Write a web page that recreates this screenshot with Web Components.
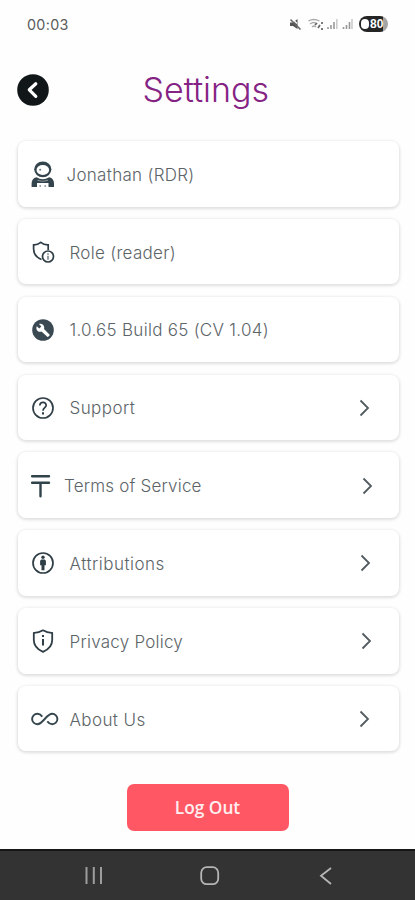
<!DOCTYPE html>
<html lang="en">
<head>
<meta charset="utf-8">
<title>Settings</title>
<style>
html,body{margin:0;width:415px;height:900px;overflow:hidden;background:#fefefe}
</style>
</head>
<body>
<settings-app></settings-app>
<script>
const icons = {
  person: '<svg width="24" height="27" viewBox="0 0 24 27"><ellipse cx="11.800" cy="8.300" rx="8.600" ry="7.900" fill="#34444c"/><ellipse cx="11.800" cy="9" rx="6.300" ry="4.900" fill="#fff"/><circle cx="9.200" cy="8.700" r="1" fill="#6a757a"/><path d="M.6 26v-3.500Q.6 17.500 5.500 16.300 11.800 20 18.200 16.300 23 17.500 23 22.500V26H17.500V22H6V26Z" fill="#34444c"/><path d="M6.500 19.300Q11.800 21.300 17 19.300" stroke="#8a9498" fill="none"/><path d="M8.500 24h1.500v2H8.500zM13.500 24h1.500v2h-1.500z" fill="#9aa2a5"/></svg>',
  role: '<svg width="24" height="24" viewBox="0 0 24 24"><g fill="none" stroke="#2f3e46" stroke-width="1.700"><path d="M10.500 19.500C5.500 17.500 2.600 14 2.600 9V4.800Q6.500 5 9.800 2.300 13 5 17.200 4.800V10"/><circle cx="17" cy="16.500" r="5.500"/></g><path d="M16.200 13.300h1.600v1.500h-1.600zm0 2.500h1.600v4h-1.600z" fill="#7b868c"/></svg>',
  build: '<svg width="24" height="24" viewBox="0 0 24 24"><circle cx="12" cy="12" r="10.800" fill="#3b4a52"/><path d="M10.500 13.600C8.800 14.200 7 13.600 6 12.200 5.200 11 5.200 9.500 5.800 8.300L8.200 10.600 10.300 8.500 8 6.100C9.300 5.600 10.900 5.800 12 6.800 13.200 8 13.500 9.700 13 11.100L18.500 16.500Q18.900 17 18.500 17.400L17.200 18.700Q16.700 19.100 16.300 18.700Z" fill="#fff"/></svg>',
  help: '<svg width="24" height="24" viewBox="0 0 24 24" fill="none" stroke="#2f3e46" stroke-width="1.700"><circle cx="12" cy="12" r="10"/><path d="M8.800 9.500Q9 6.300 12 6.300T15.200 9.300C15.200 11.600 12 11.900 12 14.800"/><path d="M12 16.200v2.200" stroke-width="2"/></svg>',
  terms: '<svg width="20" height="24" viewBox="0 0 20 24"><path d="M1 2.300H18M1 8.800H18M9.500 9V22.300" stroke="#30424a" stroke-width="2.400" stroke-linecap="round"/></svg>',
  attribution: '<svg width="24" height="24" viewBox="0 0 24 24"><circle cx="12" cy="12" r="10" fill="none" stroke="#2f3e46" stroke-width="1.700"/><circle cx="12" cy="6.300" r="1.700" fill="#2f3e46"/><path d="M10.300 8.500h3.400l1.200 1.200v4.600h-1.400v5h-3v-5H9.100V9.700z" fill="#2f3e46"/></svg>',
  privacy: '<svg width="24" height="26" viewBox="0 0 24 26"><path d="M12 2.300Q16.500 5 21.200 4.800V12Q21.200 20 12 23.800 2.800 20 2.800 12V4.800Q7.500 5 12 2.300Z" fill="none" stroke="#2f3e46" stroke-width="1.800" stroke-linejoin="round"/><path d="M11 7h2v2h-2zm0 4h2v6.500h-2z" fill="#2f3e46"/></svg>',
  infinity: '<svg width="28" height="16" viewBox="0 0 28 16"><path d="M16.300 10.300C18 12.400 19.300 13.200 21.200 13.200A5.200 5.200 0 0 0 21.200 2.800C15.500 2.800 12 13.200 6.300 13.200A5.200 5.200 0 0 1 6.300 2.800C8.500 2.800 9.800 3.700 11.300 5.600" fill="none" stroke="#35464e" stroke-width="1.900"/></svg>'
};

function define(name, markup, setup) {
  customElements.define(name, class extends HTMLElement {
    constructor() {
      super();
      this.attachShadow({mode: 'open'}).innerHTML = markup;
    }
    connectedCallback() { if (setup) setup(this, this.shadowRoot); }
  });
}

define('status-bar', `<style>
:host{display:flex;box-sizing:border-box;height:48px;padding:0 27px;align-items:center;justify-content:space-between;font:14.300px Inter,sans-serif;color:#5a5a5a}
.time{letter-spacing:.35px}
svg{display:block}
.right{display:flex;align-items:center;gap:5px}
.battery{display:flex;align-items:center;box-sizing:border-box;width:29px;height:16px;border-radius:8px;padding-left:2px;background:linear-gradient(90deg,#252525 82%,#a5a5a5 82%);color:#fff;font:600 12px/16px "Liberation Sans",sans-serif}
.battery i{width:8px;height:10px;border-radius:5px;background:#fff;margin-right:1px}
</style>
<span class="time">00:03</span>
<div class="right">
<svg width="66" height="16" viewBox="0 0 66 16"><path d="M2 6.500h3L9.500 3v10L5 10H2z" fill="#555"/><path d="M2.500 3.500l10 10" stroke="#666" stroke-width="1.600"/><path d="M4 2.500l5 5" stroke="#fefefe" stroke-width="1.200"/>
<g fill="none" stroke="#aaa" stroke-width="1.300"><path d="M20.500 5q5-3 11 0M22 8q4-3 7 0M24 11q2-2 4 0"/><path d="M27 9l2-2m1 5 2-3m2-3v2m0 4v2" stroke="#666" stroke-width="1.700"/></g>
<path d="M40 13v-2M43 13V9M46 13V6M55.500 13v-2M58.500 13V9M61.500 13V6" stroke="#999" stroke-width="1.600"/><path d="M48.800 13V3M64 13V3" stroke="#ccc" stroke-width="1.600"/></svg>
<div class="battery"><i></i><span>80</span></div></div>`);

define('page-header', `<style>
:host{display:grid;grid-template-columns:1fr auto 1fr;align-items:center;height:84px;padding:0 20px 0 16.500px;box-sizing:border-box}
svg{display:block}
h1{margin:0;font:300 34px/40px Inter,sans-serif;color:#852384;white-space:nowrap;letter-spacing:-.02px}
</style>
<svg width="32" height="32" viewBox="0 0 32 32"><circle cx="16" cy="16" r="15.800" fill="#111719"/><path d="M18.800 9.800L12.300 15.800 18.800 22.300" fill="none" stroke="#fff" stroke-width="3.200" stroke-linecap="round" stroke-linejoin="round"/></svg>
<h1><slot></slot></h1>`);

define('setting-row', `<style>
:host{display:flex;align-items:center;box-sizing:border-box;height:65.500px;padding:1px 0 0 13.500px;background:#fff;border-radius:8px;box-shadow:0 1px 3px 1px rgba(0,0,0,.12);font:300 17px/24px Inter,sans-serif;color:#5c6468}
.icon{display:flex;flex:none;width:var(--icon,24px)}
.icon svg{display:block;flex:none}
.label{margin-left:var(--gap,14.500px);padding-top:1px;letter-spacing:var(--track,.15px);white-space:nowrap;flex:1}
.chevron{display:none;margin-right:var(--end,29px)}
:host([link]) .chevron{display:block}
</style><span class="icon"></span><span class="label"><slot></slot></span>
<svg class="chevron" width="11" height="18" viewBox="0 0 11 18"><path d="M1.500 1.500L9 9l-7.500 7.500" fill="none" stroke="#525b60" stroke-width="1.800"/></svg>`,
(host, root) => { root.querySelector('.icon').innerHTML = icons[host.getAttribute('icon')]; });

define('primary-button', `<style>
:host{display:block}
button{display:block;width:162px;height:47px;padding:0;border:0;border-radius:7px;background:#ff5864;color:#ffeff0;font:600 17.300px/47px "Open Sans",sans-serif}
</style><button><slot></slot></button>`);

define('system-nav', `<style>
:host{display:flex;box-sizing:border-box;height:51px;padding:0 82px 0 83px;background:#333;border-top:2px solid #161616;align-items:center}
svg{display:block}
.home{margin:0 99px 0 95px}
</style>
<svg width="22" height="20" viewBox="0 0 22 20"><path d="M3.500 1v17M10.800 1v17M18 1v17" stroke="#9d9d9d" stroke-width="2"/></svg>
<svg class="home" width="20" height="20" viewBox="0 0 20 20"><rect x="1.200" y="1.200" width="17" height="17" rx="5.500" fill="none" stroke="#b5b5b5" stroke-width="1.800"/></svg>
<svg width="14" height="20" viewBox="0 0 14 20"><path d="M12 2L2 9.800 12 18" fill="none" stroke="#b5b5b5" stroke-width="1.800"/></svg>`);

define('settings-app', `<style>
:host{display:flex;flex-direction:column;width:415px;height:900px}
main{display:flex;flex-direction:column;gap:12.350px;padding:9px 16.500px 0 17.500px}
footer{display:flex;justify-content:center;padding-top:33px}
system-nav{margin-top:auto}
</style>
<status-bar></status-bar>
<page-header>Settings</page-header>
<main>
<setting-row icon="person" style="--icon:23.500px;--gap:12px;--track:.3px">Jonathan (RDR)</setting-row>
<setting-row icon="role" style="--track:.3px">Role (reader)</setting-row>
<setting-row icon="build" style="--track:.28px">1.0.65 Build 65 (CV 1.04)</setting-row>
<setting-row icon="help" link style="--track:.43px">Support</setting-row>
<setting-row icon="terms" link style="--icon:20px;--gap:13px;--end:26px;--track:.2px">Terms of Service</setting-row>
<setting-row icon="attribution" link style="--end:28px;--track:.5px">Attributions</setting-row>
<setting-row icon="privacy" link style="--end:27px;--track:.24px">Privacy Policy</setting-row>
<setting-row icon="infinity" link style="--icon:27px;--gap:11.500px;--track:.4px">About Us</setting-row>
</main>
<footer><primary-button>Log Out</primary-button></footer>
<system-nav></system-nav>`);
</script>
</body>
</html>
